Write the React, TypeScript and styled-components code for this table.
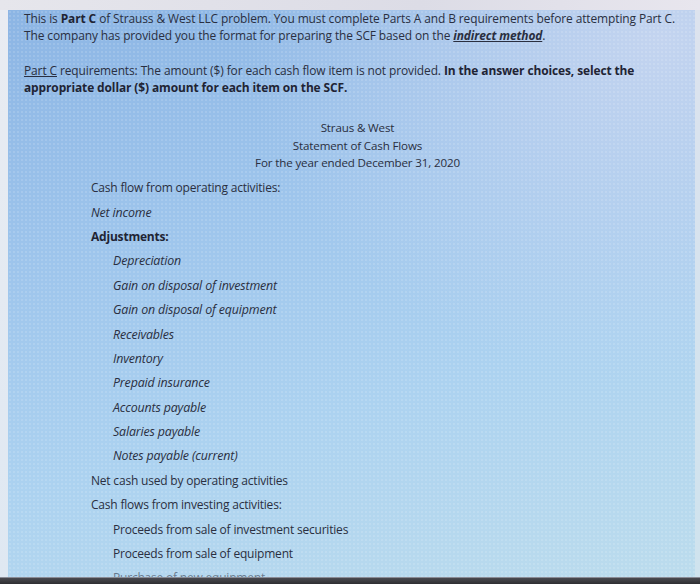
import React from "react";
import styled, { createGlobalStyle } from "styled-components";

const Global = createGlobalStyle`
  html, body { margin: 0; padding: 0; }
  body { width: 700px; height: 584px; overflow: hidden; background: #e2e3ea; }
`;

const Page = styled.div`
  width: 700px;
  height: 584px;
  display: flex;
  flex-direction: column;
  overflow: hidden;
  background: linear-gradient(90deg, #e6e6ec 0%, #dcdce6 60%, #e8e6ee 100%);
`;

const TopStrip = styled.div`
  height: 10px;
  flex: none;
`;

const Middle = styled.div`
  flex: 1;
  display: flex;
  min-height: 0;
`;

const SideStrip = styled.div<{ $w: number; $c: string }>`
  width: ${(p) => p.$w}px;
  flex: none;
  background: ${(p) => p.$c};
`;

const Panel = styled.div`
  flex: 1;
  min-width: 0;
  overflow: hidden;
  padding: 0 0 0 16px;
  background:
    radial-gradient(rgba(255, 255, 255, 0.13) 0.9px, transparent 1.3px) 0 0 / 4px 4px,
    radial-gradient(ellipse at 95% 5%, rgba(200, 214, 240, 0.9) 0%, rgba(200, 214, 240, 0) 45%),
    linear-gradient(165deg, #8cb5e4 0%, #9ec5ec 35%, #acd2f0 65%, #bcdced 100%);
  color: #2b3142;
  font-family: "Open Sans", "Liberation Sans", sans-serif;
`;

const Para = styled.p`
  margin: 0;
  font-size: 11.95px;
  line-height: 17px;
  letter-spacing: -0.1px;
  color: #2a2f41;
  white-space: nowrap;
`;

const Gap = styled.div<{ $h: number }>`
  height: ${(p) => p.$h}px;
`;

const B = styled.b`
  font-weight: 700;
  color: #1f2434;
`;

const Under = styled.span`
  text-decoration: underline;
`;

const LinkText = styled.span`
  font-weight: 700;
  font-style: italic;
  text-decoration: underline;
  color: #2a2f40;
`;

const Title = styled.div`
  display: flex;
  flex-direction: column;
  align-items: center;
  padding-left: 12px;
  padding-right: 16px;
  font-size: 11.6px;
  line-height: 17.5px;
  letter-spacing: -0.15px;
  color: #2a2f41;
`;

const List = styled.div`
  display: flex;
  flex-direction: column;
  padding-left: 67px;
  margin-top: 4px;
`;

const Item = styled.div<{ $indent?: boolean; $italic?: boolean; $bold?: boolean }>`
  height: 24.4px;
  flex: none;
  display: flex;
  align-items: center;
  padding-left: ${(p) => (p.$indent ? 22 : 0)}px;
  font-style: ${(p) => (p.$italic ? "italic" : "normal")};
  font-weight: ${(p) => (p.$bold ? 700 : 400)};
  font-size: ${(p) => (p.$italic ? "12.4px" : "12px")};
  letter-spacing: ${(p) => (p.$italic ? "-0.15px" : "-0.2px")};
  color: ${(p) => (p.$bold ? "#1f2434" : "#2a2f41")};
  white-space: nowrap;
`;

const Fade = styled.span`
  opacity: 0.55;
`;

const BottomBand = styled.div`
  height: 6px;
  flex: none;
  border-top: 1px solid #8a8c96;
  background: linear-gradient(180deg, #4a4a50 0%, #2e2e32 100%);
`;

const items: { t: string; indent?: boolean; italic?: boolean; bold?: boolean; fade?: boolean }[] = [
  { t: "Cash flow from operating activities:" },
  { t: "Net income", italic: true },
  { t: "Adjustments:", bold: true },
  { t: "Depreciation", indent: true, italic: true },
  { t: "Gain on disposal of investment", indent: true, italic: true },
  { t: "Gain on disposal of equipment", indent: true, italic: true },
  { t: "Receivables", indent: true, italic: true },
  { t: "Inventory", indent: true, italic: true },
  { t: "Prepaid insurance", indent: true, italic: true },
  { t: "Accounts payable", indent: true, italic: true },
  { t: "Salaries payable", indent: true, italic: true },
  { t: "Notes payable (current)", indent: true, italic: true },
  { t: "Net cash used by operating activities" },
  { t: "Cash flows from investing activities:" },
  { t: "Proceeds from sale of investment securities", indent: true },
  { t: "Proceeds from sale of equipment", indent: true },
  { t: "Purchase of new equipment", indent: true, fade: true },
];

export default function App() {
  return (
    <>
      <Global />
      <Page>
        <TopStrip />
        <Middle>
          <SideStrip $w={8} $c="linear-gradient(180deg, #e9ecf2 0%, #dfe8f2 100%)" />
          <Panel>
            <Para>
              This is <B>Part C</B> of Strauss &amp; West LLC problem. You must complete Parts A and B requirements before attempting Part C.
            </Para>
            <Para>
              The company has provided you the format for preparing the SCF based on the <LinkText>indirect method</LinkText>.
            </Para>
            <Gap $h={18} />
            <Para>
              <Under>Part C</Under> requirements: The amount ($) for each cash flow item is not provided. <B>In the answer choices, select the</B>
            </Para>
            <Para>
              <B>appropriate dollar ($) amount for each item on the SCF.</B>
            </Para>
            <Gap $h={23} />
            <Title>
              <div>Straus &amp; West</div>
              <div>Statement of Cash Flows</div>
              <div>For the year ended December 31, 2020</div>
            </Title>
            <List>
              {items.map((it) => (
                <Item key={it.t} $indent={it.indent} $italic={it.italic} $bold={it.bold}>
                  {it.fade ? <Fade>{it.t}</Fade> : it.t}
                </Item>
              ))}
            </List>
          </Panel>
          <SideStrip $w={5} $c="linear-gradient(180deg, #dde3ee 0%, #cfe3ee 100%)" />
        </Middle>
        <BottomBand />
      </Page>
    </>
  );
}
